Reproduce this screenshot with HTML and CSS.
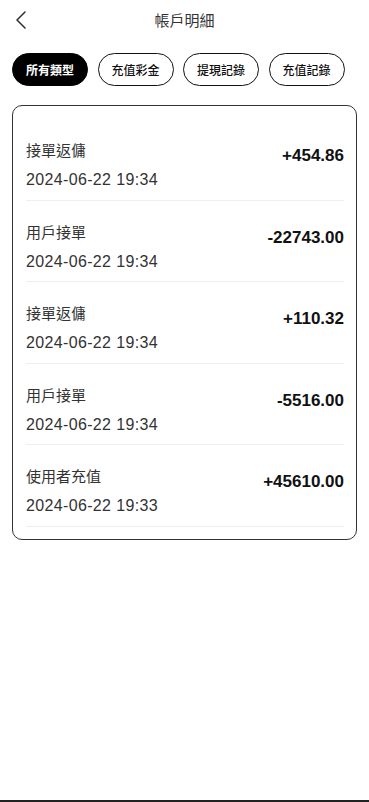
FILE: index.html
```html
<!DOCTYPE html>
<html lang="zh-Hant">
<head>
<meta charset="utf-8">
<meta name="viewport" content="width=device-width, initial-scale=1">
<title>帳戶明細</title>
<link rel="stylesheet" href="styles.css">
</head>
<body>
<div class="page">
  <header class="header">
    <button class="back" aria-label="返回">
      <svg width="12" height="18" viewBox="0 0 12 18"><polyline points="10,1 2,9 10,17" fill="none" stroke="#333" stroke-width="1.6" stroke-linecap="round" stroke-linejoin="round"/></svg>
    </button>
    <h1 class="title">帳戶明細</h1>
  </header>

  <nav class="tabs">
    <span class="tab active">所有類型</span>
    <span class="tab">充值彩金</span>
    <span class="tab">提現記錄</span>
    <span class="tab">充值記錄</span>
  </nav>

  <section class="card">
    <div class="row">
      <div class="info"><div class="name">接單返傭</div><div class="date">2024-06-22 19:34</div></div>
      <div class="amount">+454.86</div>
    </div>
    <div class="row">
      <div class="info"><div class="name">用戶接單</div><div class="date">2024-06-22 19:34</div></div>
      <div class="amount">-22743.00</div>
    </div>
    <div class="row">
      <div class="info"><div class="name">接單返傭</div><div class="date">2024-06-22 19:34</div></div>
      <div class="amount">+110.32</div>
    </div>
    <div class="row">
      <div class="info"><div class="name">用戶接單</div><div class="date">2024-06-22 19:34</div></div>
      <div class="amount">-5516.00</div>
    </div>
    <div class="row">
      <div class="info"><div class="name">使用者充值</div><div class="date">2024-06-22 19:33</div></div>
      <div class="amount">+45610.00</div>
    </div>
  </section>

  <div class="home-bar"></div>
</div>
</body>
</html>
```

FILE: styles.css
```css
* { box-sizing: border-box; }
html, body { margin: 0; padding: 0; background: #fff; }
body {
  font-family: "Liberation Sans", "Noto Sans CJK TC", sans-serif;
  color: #333;
}
.page {
  min-height: 802px;
  display: flex;
  flex-direction: column;
}
.header {
  position: relative;
  height: 40px;
  display: flex;
  align-items: center;
  justify-content: center;
}
.back {
  position: absolute;
  left: 15px;
  top: 11px;
  padding: 0;
  border: 0;
  background: none;
  width: 12px;
  height: 18px;
  display: block;
}
.back svg { display: block; }
.title {
  margin: 0;
  font-family: "Noto Sans CJK TC", sans-serif;
  font-size: 15px;
  font-weight: 400;
  color: #333;
  line-height: 20px;
}
.tabs {
  display: flex;
  gap: 9.5px;
  padding: 13px 12px 0;
}
.tab {
  height: 33px;
  padding: 0 13px;
  border: 1px solid #111;
  border-radius: 17px;
  display: flex;
  align-items: center;
  font-family: "Noto Sans CJK TC", sans-serif;
  font-size: 12px;
  font-weight: 500;
  color: #111;
  white-space: nowrap;
}
.tab.active {
  background: #000;
  border-color: #000;
  color: #fff;
  font-weight: 700;
}
.card {
  margin: 19px 12px 0;
  border: 1px solid #333;
  border-radius: 10px;
  padding: 13px 12px 12px 13px;
}
.row {
  display: flex;
  justify-content: space-between;
  align-items: flex-start;
  padding: 21px 0 9.5px;
  border-bottom: 1px solid #efefef;
}
.info {
  display: flex;
  flex-direction: column;
  gap: 10px;
}
.name {
  font-family: "Noto Sans CJK TC", sans-serif;
  font-size: 15px;
  line-height: 20px;
  color: #333;
}
.date {
  font-size: 16px;
  line-height: 20px;
  letter-spacing: 0.35px;
  color: #333;
}
.amount {
  margin-top: 4px;
  font-size: 17px;
  line-height: 24px;
  font-weight: 700;
  color: #111;
}
.home-bar {
  margin-top: auto;
  height: 2px;
  background: #222;
}
```
